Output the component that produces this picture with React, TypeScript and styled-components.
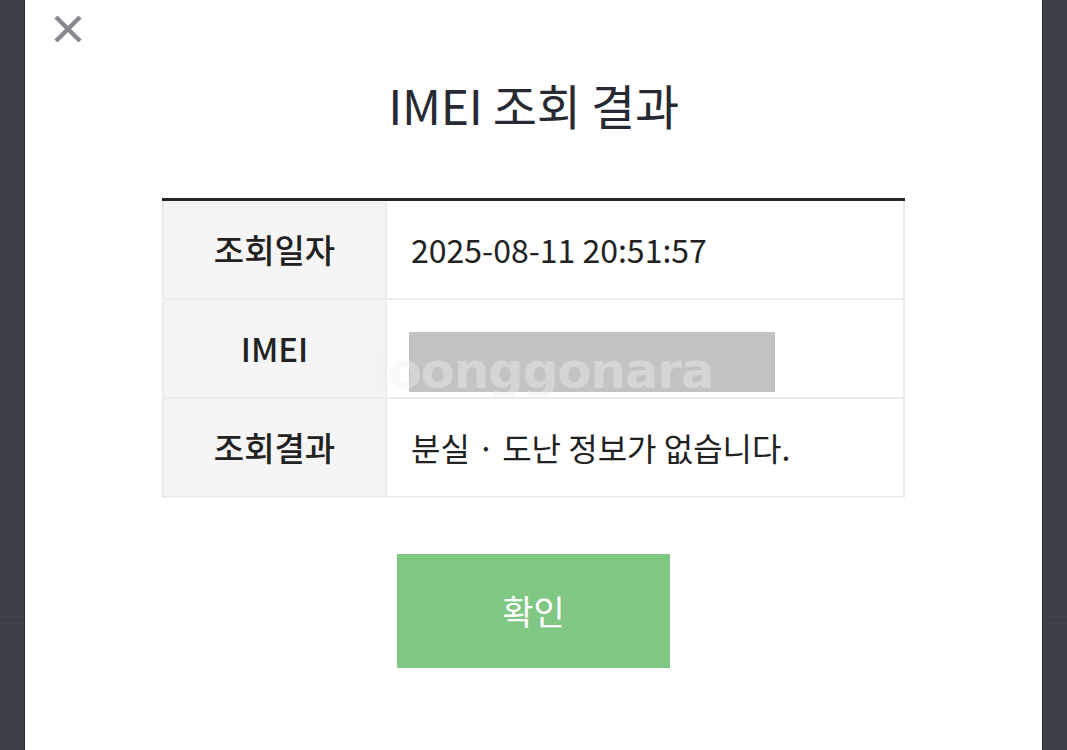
import React from 'react';
import styled, { createGlobalStyle } from 'styled-components';

const GlobalStyle = createGlobalStyle`
  html, body {
    margin: 0;
    padding: 0;
    overflow: hidden;
  }
  body {
    font-family: "Noto Sans CJK KR", "Noto Sans", sans-serif;
  }
`;

// fondo oscuro con la linea de la pagina de abajo
const Backdrop = styled.div`
  width: 1067px;
  height: 750px;
  display: flex;
  justify-content: center;
  background: linear-gradient(
    to bottom,
    #3e414a 0,
    #3e414a 620px,
    #363840 620px,
    #363840 621px,
    #3e414a 621px
  );
`;

const Modal = styled.div`
  width: 1017px;
  height: 750px;
  background: #fff;
  box-shadow: 0 0 0 1px #2a2c32;
  display: flex;
  flex-direction: column;
  align-items: center;
`;

const Header = styled.div`
  align-self: stretch;
  display: flex;
  padding: 14px 0 0 28px;
`;

const CloseButton = styled.button`
  width: 30px;
  height: 30px;
  padding: 0;
  border: none;
  background: none;
  display: flex;
  align-items: center;
  justify-content: center;
  cursor: pointer;
`;

const Title = styled.h1`
  margin: 32px 0 0;
  font-size: 48px;
  line-height: 56px;
  font-weight: 400;
  color: #282a33;
  letter-spacing: -0.3px;
`;

const TableWrap = styled.div`
  position: relative;
  margin-top: 66px;
  width: 743px;
`;

const Table = styled.table`
  width: 100%;
  border-collapse: collapse;
  border-top: 3px solid #26272b;
`;

const Row = styled.tr`
  height: 99px;
`;

const HeadCell = styled.th`
  width: 219px;
  background: #f5f5f5;
  border: 2px solid #ececec;
  border-top: none;
  font-size: 33px;
  font-weight: 500;
  color: #222;
  text-align: center;
`;

const ValueCell = styled.td`
  border: 2px solid #ececec;
  border-top: none;
  padding: 0 0 0 24px;
  font-size: 32px;
  font-weight: 400;
  color: #222;
  text-align: left;
`;

const Redacted = styled.div`
  width: 366px;
  height: 60px;
  margin: 27px 0 0 -2px;
  background: #c3c3c3;
`;

const Watermark = styled.div`
  position: absolute;
  left: 208px;
  top: 144px;
  font-family: "DejaVu Sans", sans-serif;
  font-size: 50px;
  font-weight: 700;
  letter-spacing: -1.2px;
  color: rgba(255, 255, 255, 0.38);
  text-shadow: 0 0 1px rgba(0, 0, 0, 0.04);
  pointer-events: none;
`;

const ConfirmButton = styled.button`
  margin-top: 56px;
  width: 273px;
  height: 114px;
  border: none;
  background: #80c783;
  color: #fff;
  font-family: "Noto Sans CJK KR", sans-serif;
  font-size: 34px;
  cursor: pointer;
`;

const rows = [
  { label: '조회일자', value: '2025-08-11 20:51:57' },
  { label: 'IMEI', value: null },
  { label: '조회결과', value: '분실 · 도난 정보가 없습니다.' },
];

const App: React.FC = () => {
  return (
    <>
      <GlobalStyle />
      <Backdrop>
        <Modal>
          <Header>
            <CloseButton aria-label="닫기">
              <svg width="28" height="28" viewBox="0 0 28 28">
                <path d="M2 2 L26 26 M26 2 L2 26" stroke="#898a90" strokeWidth="4.5" />
              </svg>
            </CloseButton>
          </Header>
          <Title>IMEI 조회 결과</Title>
          <TableWrap>
            <Table>
              <tbody>
                {rows.map((r) => (
                  <Row key={r.label}>
                    <HeadCell>{r.label}</HeadCell>
                    <ValueCell>{r.value ?? <Redacted />}</ValueCell>
                  </Row>
                ))}
              </tbody>
            </Table>
            <Watermark>Joonggonara</Watermark>
          </TableWrap>
          <ConfirmButton>확인</ConfirmButton>
        </Modal>
      </Backdrop>
    </>
  );
};

export default App;
